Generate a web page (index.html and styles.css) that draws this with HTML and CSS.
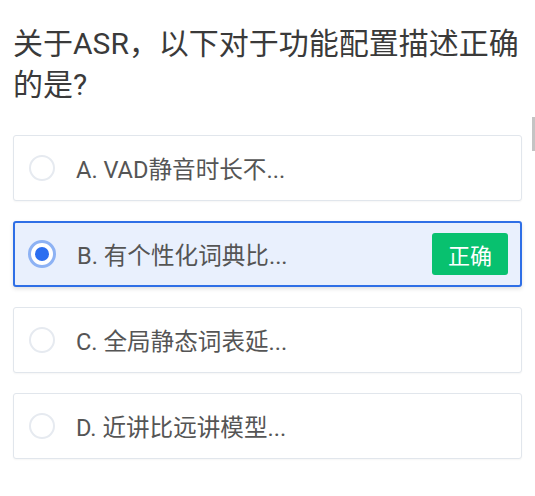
FILE: index.html
```html
<!DOCTYPE html>
<html lang="zh-CN">
<head>
<meta charset="utf-8">
<link rel="stylesheet" href="styles.css">
</head>
<body>
<div class="page">
  <h1 class="question">关于ASR，以下对于功能配置描述正确的是?</h1>
  <div class="options">
    <div class="option">
      <span class="radio"></span>
      <span class="label">A. VAD静音时长不...</span>
    </div>
    <div class="option selected">
      <span class="radio"><span class="dot"></span></span>
      <span class="label">B. 有个性化词典比...</span>
      <span class="badge">正确</span>
    </div>
    <div class="option">
      <span class="radio"></span>
      <span class="label">C. 全局静态词表延...</span>
    </div>
    <div class="option">
      <span class="radio"></span>
      <span class="label">D. 近讲比远讲模型...</span>
    </div>
  </div>
  <div class="scrollbar"></div>
</div>
</body>
</html>
```
FILE: styles.css
```css
html, body {
  margin: 0;
  padding: 0;
  background: #ffffff;
}
.page {
  position: relative;
  width: 535px;
  height: 496px;
  overflow: hidden;
  font-family: Roboto, "Noto Sans CJK SC", sans-serif;
}
.question {
  margin: 0;
  padding: 23px 10px 0 13px;
  font-size: 30px;
  font-weight: 400;
  line-height: 41px;
  color: #3a3a3a;
}
.options {
  display: flex;
  flex-direction: column;
  gap: 20px;
  margin: 30px 13px 0 13px;
}
.option {
  box-sizing: border-box;
  height: 66px;
  display: flex;
  align-items: center;
  padding: 0 13px 0 15px;
  border: 1px solid #e1e6ec;
  border-radius: 3px;
  background: #fff;
  box-shadow: 0 1px 2px rgba(0, 0, 0, 0.04);
}
.option.selected {
  border: 2px solid #2f6fe6;
  padding: 0 12px 0 14px;
  background: #e9f0fd;
  box-shadow: 0 2px 4px rgba(0, 0, 0, 0.12);
}
.radio {
  box-sizing: border-box;
  width: 26px;
  height: 26px;
  border: 2px solid #e6eaf0;
  border-radius: 50%;
  flex: none;
  display: flex;
  align-items: center;
  justify-content: center;
}
.selected .radio {
  width: 28px;
  height: 28px;
  border: 3px solid #8db2f4;
  background: #fff;
  margin-left: -1px;
}
.dot {
  width: 14px;
  height: 14px;
  border-radius: 50%;
  background: #2b6ef0;
}
.label {
  margin-left: 21px;
  font-size: 23.6px;
  color: #555555;
  flex: 1;
  white-space: nowrap;
}
.badge {
  width: 76px;
  height: 42px;
  display: flex;
  align-items: center;
  justify-content: center;
  background: #08c16f;
  color: #fff;
  font-size: 22px;
  border-radius: 3px;
}
.scrollbar {
  position: absolute;
  right: 0;
  top: 117px;
  width: 3px;
  height: 34px;
  background: #c4c4c4;
}
```
